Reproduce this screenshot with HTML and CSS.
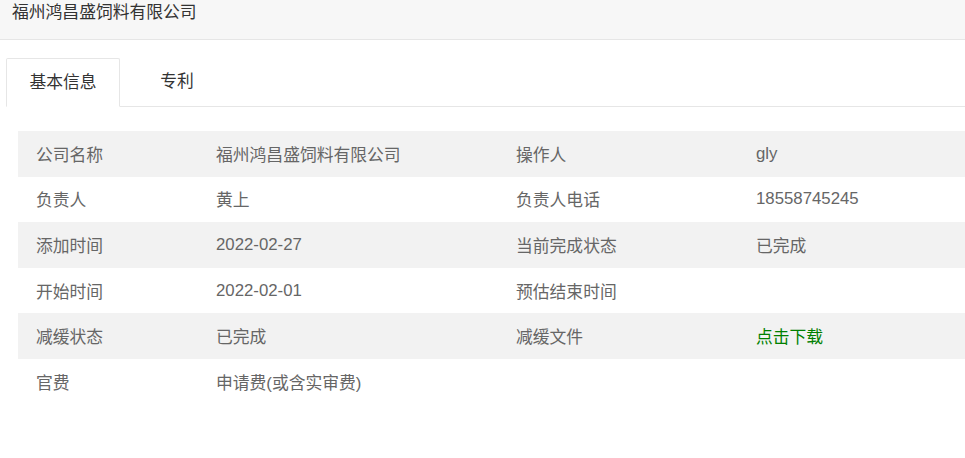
FILE: index.html
```html
<!DOCTYPE html>
<html>
<head>
    <title>专利详情</title>
    <meta charset="utf-8">
    <link rel="stylesheet" href="styles.css">
</head>
<body>
    <div class="top">福州鸿昌盛饲料有限公司</div>
    <ul class="tabs">
        <li class="active">基本信息</li>
        <li>专利</li>
        <li class="rest"></li>
    </ul>
    <table class="info">
        <tr>
            <td class="c1">公司名称</td>
            <td class="c2">福州鸿昌盛饲料有限公司</td>
            <td class="c3">操作人</td>
            <td class="c4">gly</td>
        </tr>
        <tr>
            <td>负责人</td>
            <td>黄上</td>
            <td>负责人电话</td>
            <td>18558745245</td>
        </tr>
        <tr>
            <td>添加时间</td>
            <td>2022-02-27</td>
            <td>当前完成状态</td>
            <td>已完成</td>
        </tr>
        <tr>
            <td>开始时间</td>
            <td>2022-02-01</td>
            <td>预估结束时间</td>
            <td></td>
        </tr>
        <tr>
            <td>减缓状态</td>
            <td>已完成</td>
            <td>减缓文件</td>
            <td><a href="#" class="down">点击下载</a></td>
        </tr>
        <tr>
            <td>官费</td>
            <td>申请费(或含实审费)</td>
            <td></td>
            <td></td>
        </tr>
    </table>
</body>
</html>
```

FILE: styles.css
```css
body {
    margin: 0;
    font-family: "Microsoft YaHei", "Liberation Sans", "Noto Sans CJK SC", sans-serif;
    font-size: 16.8px;
    color: #333;
    background: #fff;
}
.top {
    height: 39px;
    line-height: 25px;
    padding-left: 12px;
    background-color: #f7f7f7;
    border-bottom: 1px solid #e6e6e6;
}
.tabs {
    display: flex;
    list-style-type: none;
    margin: 18px 0 0 6px;
    padding: 0;
    height: 49px;
}
.tabs li {
    box-sizing: border-box;
    width: 114px;
    height: 49px;
    line-height: 47px;
    text-align: center;
    border-bottom: 1px solid #e6e6e6;
}
.tabs li.active {
    border: 1px solid #e6e6e6;
    border-bottom: 1px solid #fff;
    border-radius: 2px 2px 0 0;
}
.tabs li.rest {
    flex: 1;
}
.info {
    margin: 24px 0 0 18px;
    width: 947px;
    border-collapse: collapse;
    table-layout: fixed;
    color: #666;
}
.info td {
    height: 45.6px;
    padding: 0 18px;
    box-sizing: border-box;
    white-space: nowrap;
}
.info tr:nth-child(odd) {
    background-color: #f2f2f2;
}
.info .c1 { width: 180px; }
.info .c2 { width: 300px; }
.info .c3 { width: 240px; }
.down {
    color: #008000;
    text-decoration: none;
}
```
